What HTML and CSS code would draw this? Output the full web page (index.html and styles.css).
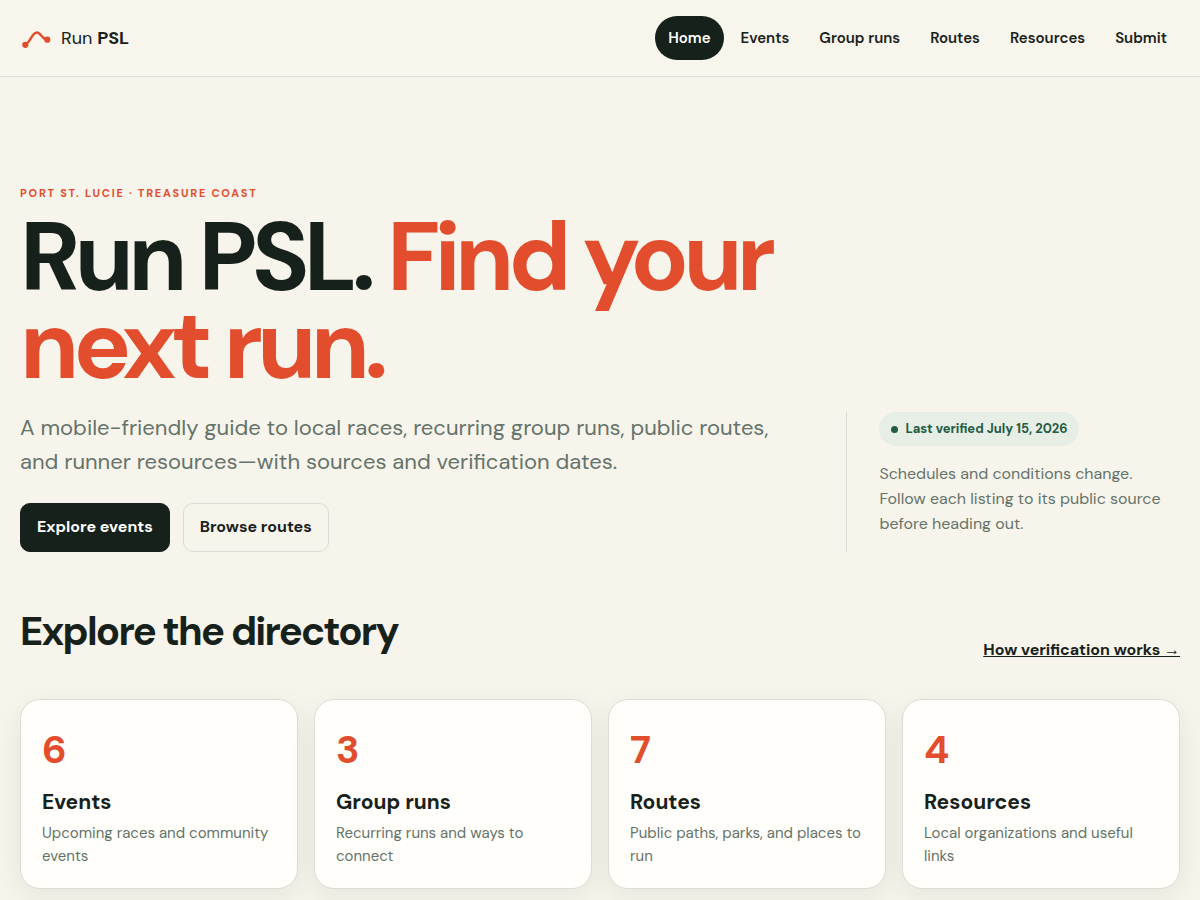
FILE: index.html
```html
<!DOCTYPE html>
<html lang="en">
<head>
<meta charset="utf-8">
<meta name="viewport" content="width=device-width, initial-scale=1">
<title>Run PSL</title>
<link rel="stylesheet" href="styles.css">
</head>
<body>
<header class="site-header">
  <a class="brand" href="#">
    <svg class="brand-mark" viewBox="0 0 32 32" aria-hidden="true">
      <path d="M5.500 22.500C10.500 20 12 10.500 17 10.500C21 10.500 22 17.500 27 17.500" fill="none" stroke="currentColor" stroke-width="2.400" stroke-linecap="round"/>
      <circle cx="5.300" cy="22.800" r="3.100" fill="currentColor"/>
      <circle cx="27.300" cy="17.700" r="3.100" fill="currentColor"/>
    </svg>
    <span>Run <strong>PSL</strong></span>
  </a>
  <nav class="site-nav" aria-label="Main">
    <a class="nav-link is-current" href="#" aria-current="page">Home</a>
    <a class="nav-link" href="#">Events</a>
    <a class="nav-link" href="#">Group runs</a>
    <a class="nav-link" href="#">Routes</a>
    <a class="nav-link" href="#">Resources</a>
    <a class="nav-link" href="#">Submit</a>
  </nav>
</header>
<main class="page">
  <section class="hero">
    <div class="hero-copy">
      <p class="eyebrow">Port St. Lucie · Treasure Coast</p>
      <h1 class="hero-title">Run PSL. <span class="accent">Find your next run.</span></h1>
      <p class="lead">A mobile-friendly guide to local races, recurring group runs, public routes, and runner resources—with sources and verification dates.</p>
      <div class="actions">
        <a class="button button-primary" href="#">Explore events</a>
        <a class="button" href="#">Browse routes</a>
      </div>
    </div>
    <aside class="hero-note">
      <span class="badge">Last verified July 15, 2026</span>
      <p class="note-text">Schedules and conditions change. Follow each listing to its public source before heading out.</p>
    </aside>
  </section>
  <section class="directory">
    <div class="section-head">
      <h2 class="section-title">Explore the directory</h2>
      <a class="text-link" href="#">How verification works <span class="arrow">→</span></a>
    </div>
    <div class="cards">
      <a class="card" href="#"><span class="count">6</span><h3 class="card-title">Events</h3><p class="card-text">Upcoming races and community events</p></a>
      <a class="card" href="#"><span class="count">3</span><h3 class="card-title">Group runs</h3><p class="card-text">Recurring runs and ways to connect</p></a>
      <a class="card" href="#"><span class="count">7</span><h3 class="card-title">Routes</h3><p class="card-text">Public paths, parks, and places to run</p></a>
      <a class="card" href="#"><span class="count">4</span><h3 class="card-title">Resources</h3><p class="card-text">Local organizations and useful links</p></a>
    </div>
  </section>
</main>
</body>
</html>
```
FILE: styles.css
```css
:root {
  --ink: #17211b;
  --muted: #64736a;
  --line: #d9ddd5;
  --paper: #f7f4eb;
  --card: #fffefa;
  --accent: #e24e2d;
  --green: #245b42;
  --mint: #e6eee6;
}
* { box-sizing: border-box; }
body {
  margin: 0;
  background: var(--paper);
  color: var(--ink);
  font-family: "DM Sans", Inter, sans-serif;
  font-size: 16px;
  line-height: 25px;
}
h1, h2, h3, p { margin: 0; }
a { color: inherit; text-decoration: none; }
.site-header {
  display: flex;
  align-items: center;
  justify-content: space-between;
  padding: 16px 20px;
  background: #f8f5ec;
  border-bottom: 1px solid var(--line);
}
.brand { display: flex; align-items: center; gap: 9px; font-size: 18px; }
.brand strong { font-weight: 700; }
.brand-mark { width: 32px; height: 32px; color: var(--accent); }
.site-nav { display: flex; gap: 4px; }
.nav-link {
  padding: 0 13px;
  border-radius: 22px;
  font-size: 15px;
  font-weight: 600;
  line-height: 44px;
}
.nav-link.is-current { background: var(--ink); color: #fff; }
.page { padding: 0 20px; }
.hero {
  display: grid;
  grid-template-columns: 7fr 3fr;
  align-items: end;
  gap: 48px;
  padding: 104px 0 55px;
}
.eyebrow {
  color: var(--accent);
  font-size: 11px;
  font-weight: 700;
  letter-spacing: 0.16em;
  text-transform: uppercase;
}
.hero-title {
  margin: 8px 0 21px;
  font-size: 96px;
  font-weight: 700;
  line-height: 88px;
  letter-spacing: -0.06em;
}
.accent { color: var(--accent); }
.lead { color: var(--muted); font-size: 22px; line-height: 34px; }
.actions { display: flex; flex-wrap: wrap; gap: 13px; margin-top: 24px; }
.button {
  padding: 10px 16px 12px;
  border: 1px solid var(--line);
  border-radius: 10px;
  font-size: 16px;
  font-weight: 700;
}
.button-primary { border-color: var(--ink); background: var(--ink); color: #fff; }
.hero-note { padding: 0 0 16px 32px; border-left: 1px solid var(--line); }
.badge {
  display: inline-flex;
  align-items: center;
  gap: 7px;
  padding: 0 11px 0 12px;
  border-radius: 17px;
  background: var(--mint);
  color: var(--green);
  font-size: 13px;
  font-weight: 700;
  line-height: 34px;
}
.badge::before { width: 7px; height: 7px; border-radius: 50%; background: currentColor; content: ""; }
.note-text { margin-top: 15px; color: var(--muted); font-size: 16px; }
.section-head {
  display: flex;
  align-items: flex-end;
  justify-content: space-between;
  margin-bottom: 37px;
}
.section-title {
  padding-bottom: 7px;
  font-size: 40px;
  font-weight: 700;
  line-height: 48px;
  letter-spacing: -0.045em;
}
.text-link { font-size: 16px; font-weight: 700; text-decoration: underline; }
.arrow { font-family: "Liberation Sans", sans-serif; }
.cards { display: grid; grid-template-columns: repeat(4, 1fr); gap: 16px; padding-bottom: 56px; }
.card {
  padding: 28px 21px 20px;
  border: 1px solid var(--line);
  border-radius: 20px;
  background: var(--card);
  box-shadow: 0 8px 28px rgba(23, 33, 27, 0.07);
}
.count { display: block; color: var(--accent); font-size: 39px; font-weight: 700; line-height: 44px; }
.card-title { margin: 16px 0 6px; font-size: 21px; font-weight: 700; line-height: 28px; }
.card-text { color: var(--muted); font-size: 15px; line-height: 23px; }
@media (max-width: 800px) {
  .site-header { flex-wrap: wrap; }
  .site-nav { flex-wrap: wrap; }
  .hero { grid-template-columns: 1fr; padding-top: 48px; }
  .hero-title { font-size: 56px; line-height: 56px; }
  .cards { grid-template-columns: repeat(2, 1fr); }
}
```
